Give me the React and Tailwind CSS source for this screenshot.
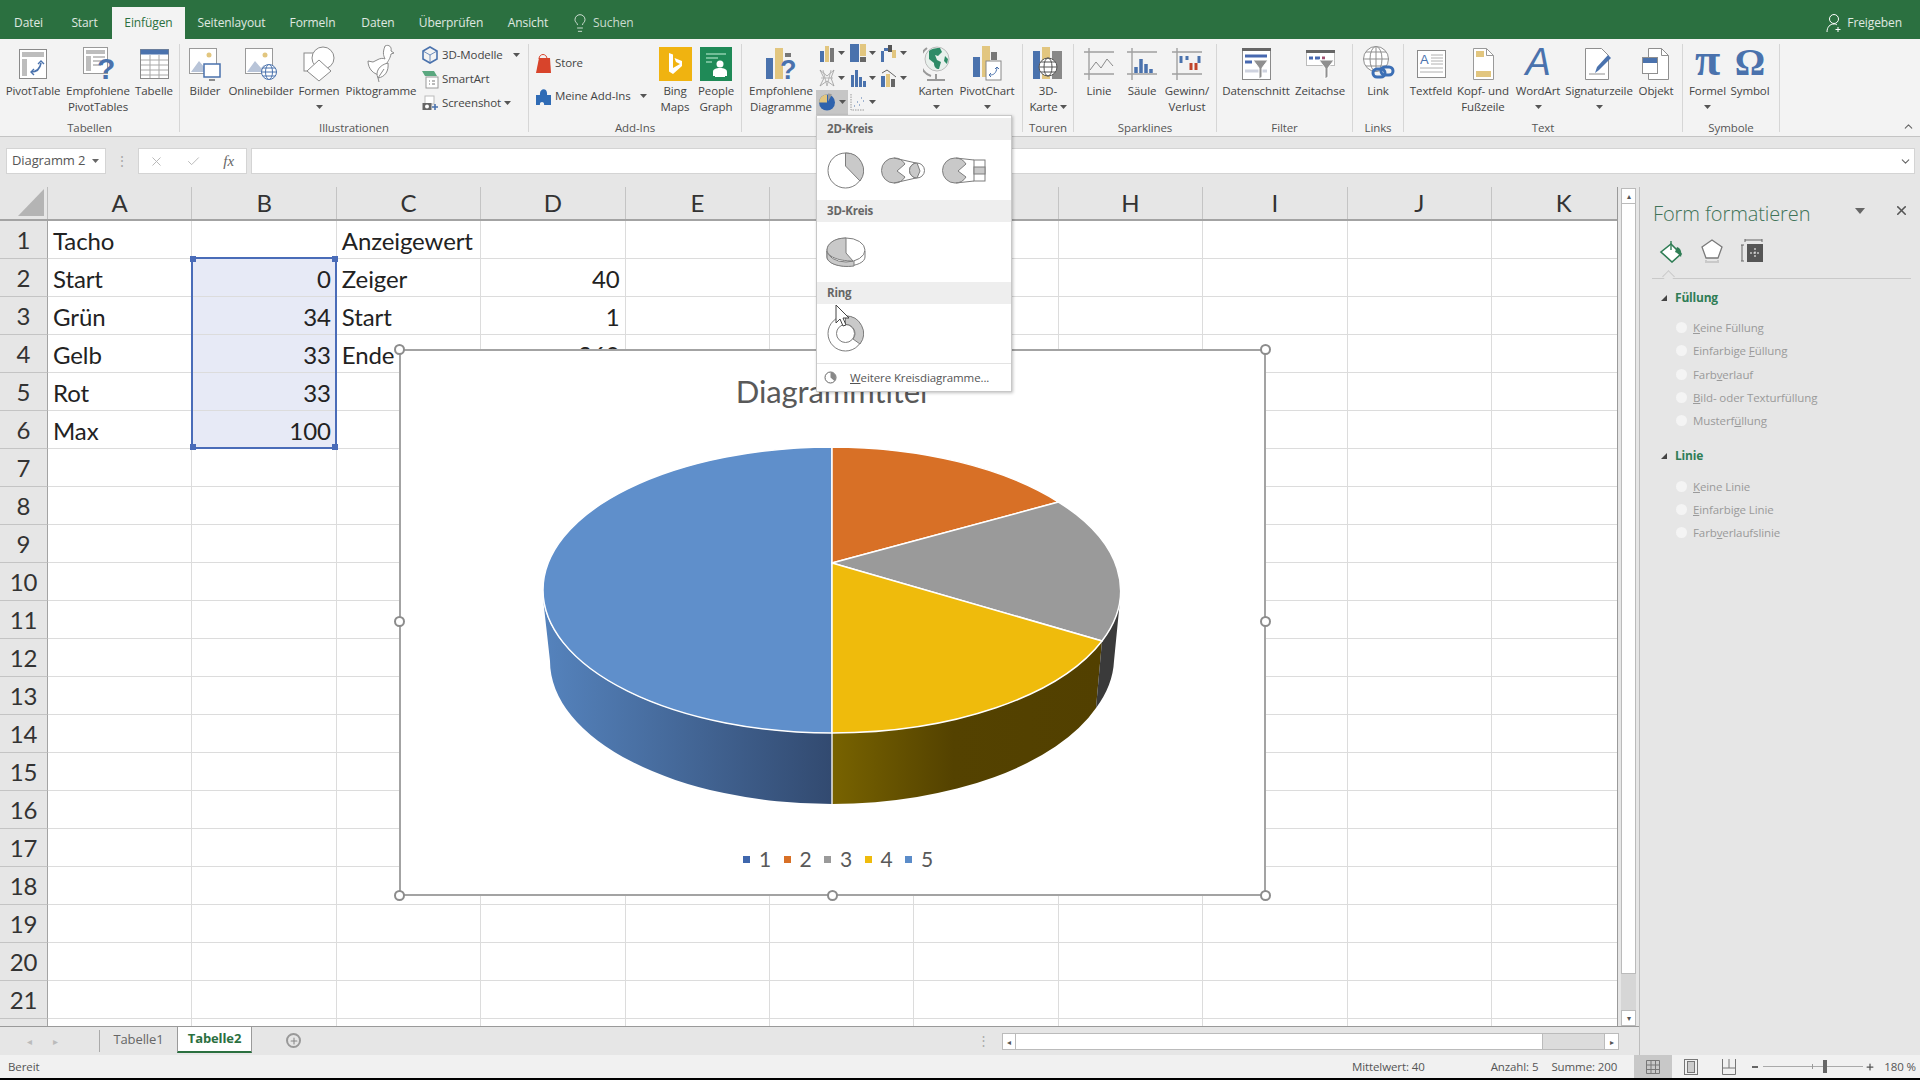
import React from 'react';
import { Lightbulb, X, Check, Plus, ChevronUp, ChevronDown } from 'lucide-react';

const Caret = ({ color = '#555' }) => (
  <svg width="7" height="4" viewBox="0 0 7 4" className="shrink-0"><path d="M0 0h7L3.5 4z" fill={color} /></svg>
);

const Svg = ({ w, h, vb, children }) => (
  <svg width={w} height={h} viewBox={vb || `0 0 ${w} ${h}`} fill="none" className="shrink-0">{children}</svg>
);

const BLUE = '#4a72ad';
const GOLD = '#e2c67f';
const GRAY = '#8c8c8c';

// ribbon icons
const PivotIcon = () => (
  <Svg w={28} h={30}>
    <rect x=".5" y=".5" width="27" height="29" fill="#fff" stroke="#8a8a8a" />
    <rect x="3" y="3" width="22" height="5" fill="#bdbdbd" />
    <rect x="3" y="10" width="5" height="17" fill="#bdbdbd" />
    <path d="M12 23c5 0 9-3 10-9" stroke={BLUE} strokeWidth="1.6" />
    <path d="M19 15l3-3 3 3M15 20l-3 3 3 3" stroke={BLUE} strokeWidth="1.4" />
  </Svg>
);
const RecPivotIcon = () => (
  <Svg w={34} h={36}>
    <rect x="2.5" y="1.5" width="24" height="26" fill="#fff" stroke="#9a9a9a" />
    <rect x="5" y="4" width="19" height="4" fill="#bdbdbd" />
    <rect x="5" y="10" width="5" height="15" fill="#bdbdbd" />
    <path d="M12 11h12M12 15h8M12 19h8" stroke="#c4c4c4" strokeWidth="2" />
    <text x="16" y="33" fontSize="30" fontWeight="700" fontFamily="Liberation Sans" fill={BLUE}>?</text>
  </Svg>
);
const TableIcon = () => (
  <Svg w={29} h={30}>
    <rect x=".5" y=".5" width="28" height="29" fill="#fff" stroke="#8a8a8a" />
    <rect x=".5" y=".5" width="28" height="5" fill={BLUE} />
    <path d="M1 11h27M1 16h27M1 21h27M1 26h27M10 6v23M19 6v23" stroke="#a8a8a8" />
  </Svg>
);
const PicIcon = ({ online }) => (
  <Svg w={32} h={34}>
    <rect x=".5" y="1.5" width="27" height="25" fill="#fff" stroke="#9a9a9a" />
    <circle cx="20" cy="8" r="2.5" fill={GOLD} />
    <path d="M2 25l8-11 6 7 3-3 7 7z" fill="#b8c4d8" />
    {online ? (
      <g stroke={BLUE} fill="#fff">
        <circle cx="24" cy="25" r="7.5" />
        <ellipse cx="24" cy="25" rx="3.5" ry="7.5" />
        <path d="M16.5 25h15M18 21h12M18 29h12" />
      </g>
    ) : (
      <g>
        <rect x="15" y="17" width="16" height="13" fill="#fff" stroke={BLUE} strokeWidth="1.5" />
        <path d="M20 33h6" stroke={GRAY} strokeWidth="2" />
      </g>
    )}
  </Svg>
);
const ShapesIcon = () => (
  <Svg w={32} h={36}>
    <rect x="1" y="7" width="19" height="18" fill="#fff" stroke="#8a8a8a" />
    <circle cx="20" cy="12" r="11" fill="#fff" stroke="#8a8a8a" />
    <path d="M16 14l12 11-12 10L4 25z" fill="#fff" stroke="#8a8a8a" />
  </Svg>
);
const PictoIcon = () => (
  <Svg w={30} h={40}>
    <path d="M19 2c4-2 7 1 6 5l3 2-3 1c-1 5-3 7-4 9 2 4-2 9-6 12-7 0-13-6-13-14l5 1 4-2c3-2 7-2 8-1-1-3-3-5 0-13z" fill="#fff" stroke="#8a8a8a" strokeWidth="1" />
    <path d="M12 34c-3-6 1-13 10-15 1 8-3 14-10 15zM12 34l6-9M13 38l-1-4" stroke="#8a8a8a" fill="#fff" />
  </Svg>
);
const CubeIcon = () => (
  <Svg w={16} h={18}>
    <path d="M8 1l7 4v8l-7 4-7-4V5z" stroke={BLUE} strokeWidth="1.6" />
    <path d="M8 9l7-4M8 9v8M8 9L1 5" stroke={BLUE} strokeWidth=".8" />
  </Svg>
);
const SmartIcon = () => (
  <Svg w={18} h={19}>
    <path d="M1 1h12l3 5H4z" fill="#5aa77f" />
    <rect x="5" y="7" width="12" height="11" fill="#fff" stroke="#9a9a9a" />
    <path d="M8 11h1M8 14h1M11 11h3M11 14h3" stroke="#777" />
  </Svg>
);
const ShotIcon = () => (
  <Svg w={17} h={16}>
    <rect x="3" y="1" width="9" height="8" fill="#fff" stroke="#bbb" />
    <rect x=".5" y="8" width="9" height="7" fill="#666" />
    <circle cx="5" cy="11.5" r="2" fill="#fff" />
    <path d="M13 9v6M10 12h6" stroke={BLUE} strokeWidth="1.6" />
  </Svg>
);
const StoreIcon = () => (
  <Svg w={15} h={19}>
    <path d="M3 4h11l1 15H0z" fill="#d8442b" />
    <path d="M3 5c0-6 8-6 8 0" stroke="#d8442b" />
  </Svg>
);
const AddinIcon = () => (
  <Svg w={15} h={17}>
    <path d="M0 7h4c-1-7 8-8 7 0h4v10H8c1-4-5-4-4 0H0z" fill="#2f6bb5" />
  </Svg>
);
const BingIcon = () => (
  <div className="w-[33px] h-[34px] bg-[#f0b310] flex items-center justify-center">
    <Svg w={16} h={24}>
      <path d="M2 1l4 1.5V16l7-4-4-2-1.5-4L15 9v5L6 22l-4-2.5z" fill="#fff" />
    </Svg>
  </div>
);
const PeopleIcon = () => (
  <div className="w-[32px] h-[34px] bg-[#1f8a57] relative overflow-hidden">
    <Svg w={32} h={34}>
      <path d="M6 7h20M6 11h12M6 15h6" stroke="#8fd0ae" strokeWidth="1.5" />
      <circle cx="20" cy="17" r="3.5" fill="#fff" />
      <path d="M13 29v-4c0-3 3-4 7-4s7 1 7 4v4h-2v1H15v-1z" fill="#fff" />
    </Svg>
  </div>
);
const RecChartIcon = () => (
  <Svg w={32} h={36}>
    <rect x="1" y="12" width="7" height="21" fill={BLUE} />
    <rect x="10" y="2" width="8" height="31" fill={GOLD} />
    <rect x="20" y="7" width="6" height="4" fill="#777" />
    <text x="15" y="33" fontSize="27" fontWeight="700" fontFamily="Liberation Sans" fill={BLUE}>?</text>
  </Svg>
);
const Bars = ({ children }) => <Svg w={16} h={18}>{children}</Svg>;
const ColIcon = () => (
  <Bars><rect x="1" y="7" width="4" height="11" fill={BLUE} /><rect x="6" y="2" width="4" height="16" fill={GOLD} /><rect x="11" y="4" width="4" height="14" fill="#777" /></Bars>
);
const TreeIcon = () => (
  <Bars><rect x="0" y="0" width="9" height="18" fill={BLUE} /><rect x="10" y="0" width="6" height="12" fill={GOLD} /><rect x="10" y="13" width="6" height="5" fill="#666" /></Bars>
);
const WaterIcon = () => (
  <Bars><rect x="0" y="7" width="3" height="11" fill={BLUE} /><rect x="3" y="4" width="4" height="3" fill={BLUE} /><rect x="7" y="1" width="4" height="7" fill="#555" /><rect x="11" y="6" width="4" height="8" fill={GOLD} /></Bars>
);
const RadarIcon = () => (
  <Bars><path d="M1 1l4 8-4 8 7-5 7 5-3-8 3-8-7 6z" stroke="#999" strokeWidth=".8" /><path d="M4 1l4 16 4-16M2 9h12" stroke="#aaa" strokeWidth=".8" /></Bars>
);
const StatIcon = () => (
  <Bars><rect x="1" y="6" width="3" height="12" fill={BLUE} /><rect x="5" y="1" width="3" height="17" fill={BLUE} /><rect x="9" y="8" width="3" height="10" fill={BLUE} /><rect x="13" y="12" width="3" height="6" fill={BLUE} /></Bars>
);
const ComboIcon = () => (
  <Bars><rect x="0" y="7" width="4" height="11" fill={BLUE} /><rect x="5" y="5" width="4" height="13" fill={GOLD} /><rect x="10" y="10" width="4" height="8" fill="#666" /><path d="M1 4l5-3 4 3 5 4" stroke="#666" /></Bars>
);
const PieSmall = () => (
  <Svg w={17} h={18}>
    <circle cx="8" cy="9.5" r="8" fill="#2f63ad" />
    <path d="M8 9.500V1.500A8 8 0 0 0 0 9.500z" fill={GOLD} />
    <path d="M9 8.500V.5a8 8 0 0 1 4 1z" fill="#9a9a9a" />
  </Svg>
);
const ScatterIcon = () => (
  <Svg w={16} h={18}>
    <path d="M1 1v16h14" stroke="#999" strokeDasharray="1.5 1" />
    <path d="M4 13h1M7 9h1M9 12h1M11 5h1M13 8h1" stroke={BLUE} />
  </Svg>
);
const GlobeIcon = () => (
  <Svg w={27} h={40}>
    <path d="M4 4a16 16 0 0 0 4 28" stroke="#999" strokeWidth="2" />
    <circle cx="14" cy="15" r="12" fill="#e8f0ec" stroke="#bbb" />
    <path d="M6 7c4-3 8-3 11-3l2 4-4 4-3-1 2 5 4 2-2 7c-3 0-5-2-5-6l-5-4zM22 12l3 3-1 5-3-3z" fill="#2e8b67" />
    <path d="M4 36h18M13 30v6" stroke="#999" strokeWidth="2" />
  </Svg>
);
const PivChartIcon = () => (
  <Svg w={30} h={38}>
    <rect x="1" y="12" width="7" height="20" fill={BLUE} />
    <rect x="10" y="1" width="8" height="31" fill={GOLD} />
    <rect x="19" y="7" width="6" height="8" fill="#777" />
    <rect x="14" y="16" width="15" height="19" fill="#fff" stroke="#888" />
    <path d="M18 30c4 0 6-2 7-7M23 24l2-2 2 2M19 28l-2 2 2 2" stroke={BLUE} />
  </Svg>
);
const Map3DIcon = () => (
  <Svg w={30} h={36}>
    <rect x="0" y="5" width="7" height="28" fill={BLUE} />
    <rect x="9" y="1" width="8" height="32" fill={GOLD} />
    <rect x="19" y="5" width="10" height="28" fill="#888" />
    <circle cx="15" cy="21" r="9" fill="#fff" stroke="#555" />
    <ellipse cx="15" cy="21" rx="4" ry="9" stroke="#555" />
    <path d="M6 21h18M8 16h14M8 26h14" stroke="#555" />
  </Svg>
);
const Spark = ({ children }) => (
  <Svg w={30} h={32}>
    <path d="M0 4h30M0 26h30M5 0v32" stroke="#a0a0a0" strokeWidth="1.4" />
    {children}
  </Svg>
);
const SliceIcon = () => (
  <Svg w={29} h={32}>
    <rect x=".5" y=".5" width="28" height="31" fill="#fff" stroke="#8a8a8a" />
    <rect x="0" y="0" width="29" height="3" fill="#666" />
    <path d="M3 8h22" stroke="#4768b0" strokeWidth="3" />
    <path d="M3 14h7" stroke="#4768b0" strokeWidth="3" />
    <path d="M3 23h22" stroke="#cfd3df" strokeWidth="3" />
    <path d="M11 12h15l-6 8v9l-3 2V20z" fill="#8f8f8f" stroke="#fff" />
  </Svg>
);
const TimelineIcon = () => (
  <Svg w={29} h={32}>
    <rect x=".5" y="2.5" width="28" height="15" fill="#fff" stroke="#bbb" />
    <rect x="0" y="2" width="29" height="3" fill="#666" />
    <path d="M3 10h4M9 10h5" stroke="#4768b0" strokeWidth="3" />
    <path d="M16 10h3" stroke="#a05070" strokeWidth="3" />
    <path d="M13 12h15l-6 8v9l-3 2V20z" fill="#8f8f8f" stroke="#fff" />
  </Svg>
);
const LinkIcon = () => (
  <Svg w={33} h={38}>
    <g stroke="#8f8f8f" fill="#fff">
      <circle cx="14" cy="14" r="12.5" />
      <ellipse cx="14" cy="14" rx="6" ry="12.5" />
      <path d="M1.5 14h25M4 7h20M4 21h20M14 1.5v25" />
    </g>
    <g stroke="#3c6fb5" strokeWidth="3" fill="none">
      <rect x="11" y="24" width="12" height="8" rx="4" />
      <rect x="19" y="22" width="12" height="8" rx="4" />
    </g>
  </Svg>
);
const TextboxIcon = () => (
  <Svg w={29} h={28}>
    <rect x=".5" y=".5" width="28" height="27" fill="#fff" stroke="#8a8a8a" />
    <text x="3" y="14" fontSize="13" fontFamily="Liberation Sans" fill={BLUE}>A</text>
    <path d="M14 5h12M14 8h12M14 11h12M14 14h12M3 18h23M3 22h23" stroke="#b0b0b0" />
  </Svg>
);
const PageIcon = () => (
  <Svg w={21} h={32}>
    <path d="M.5.5h13l7 7v24H.5z" fill="#fff" stroke="#9a9a9a" />
    <path d="M13.5.5v7h7" stroke="#9a9a9a" />
    <rect x="3" y="3" width="8" height="6" fill={GOLD} />
    <rect x="3" y="23" width="15" height="6" fill={GOLD} />
  </Svg>
);
const SigIcon = () => (
  <Svg w={28} h={34}>
    <path d="M.5 1.5h16l7 7v24H.5z" fill="#fff" stroke="#8f8f8f" />
    <path d="M4 27h16" stroke="#8f8f8f" />
    <path d="M10 26l2-6 11-12 3 3-12 12z" fill={BLUE} />
  </Svg>
);
const ObjectIcon = () => (
  <Svg w={28} h={34}>
    <path d="M6.5 1.5h13l7 7v24h-20z" fill="#fff" stroke="#8f8f8f" />
    <path d="M19.5 1.5v7h7" stroke="#8f8f8f" />
    <rect x=".5" y="10.5" width="15" height="16" fill="#fff" stroke="#8f8f8f" />
    <rect x="1" y="11" width="14" height="5" fill={BLUE} />
  </Svg>
);

const Big = ({ w, icon, l1, l2, caret }) => (
  <div className={`${w} shrink-0 flex flex-col items-center`}>
    <div className="h-[39px] flex items-center justify-center">{icon}</div>
    <div className="h-[16px] leading-[16px] whitespace-nowrap">{l1}</div>
    {l2 && <div className="h-[16px] leading-[16px] whitespace-nowrap flex items-center gap-[2px]">{l2}</div>}
    {caret && <div className="h-[16px] flex items-center justify-center"><Caret /></div>}
  </div>
);

const Group = ({ w, label, children, line = true }) => (
  <div className={`${w} h-[88px] shrink-0 flex flex-col ${line ? 'border-r border-[#d6d6d6]' : ''}`}>
    <div className="flex h-[72px]">{children}</div>
    <div className="mt-auto -mb-[4px] leading-[16px] text-center text-[#555] whitespace-nowrap">{label}</div>
  </div>
);

const Small = ({ icon, text, caret }) => (
  <div className="flex items-center gap-[3px] h-[24px] whitespace-nowrap">
    <div className="w-[18px] flex justify-center">{icon}</div>
    <span>{text}</span>
    {caret}
  </div>
);

const tabs = [
  ['Datei', 'w-[57px]'],
  ['Start', 'w-[55px]'],
  ['Einfügen', 'w-[73px]'],
  ['Seitenlayout', 'w-[93px]'],
  ['Formeln', 'w-[69px]'],
  ['Daten', 'w-[62px]'],
  ['Überprüfen', 'w-[84px]'],
  ['Ansicht', 'w-[70px]'],
];

function TabBar() {
  return (
    <div className="h-[39px] bg-[#2b7040] flex text-white/85 shrink-0 text-[12px] tracking-[-0.1px]">
      {tabs.map(([t, w]) => (
        <div key={t} className={`${w} flex items-center justify-center mt-[7px] h-[32px] ${t === 'Einfügen' ? 'bg-[#f3f3f3] text-[#2b7040]' : ''}`}>{t}</div>
      ))}
      <div className="flex items-center gap-[3px] ml-[7px] mt-[7px] h-[32px] text-white/75">
        <Lightbulb size={20} strokeWidth={1.2} />
        <span>Suchen</span>
      </div>
      <div className="ml-auto mr-[18px] mt-[7px] h-[32px] flex items-center gap-[5px]">
        <Svg w={16} h={20}>
          <circle cx="8" cy="6" r="4.5" stroke="#fff" />
          <path d="M1 19c0-5 3-8 7-8 1 0 2 0 3 1M12 14v5M9.500 16.500h5" stroke="#fff" />
        </Svg>
        <span>Freigeben</span>
      </div>
    </div>
  );
}

function Ribbon() {
  return (
    <div className="h-[97px] bg-[#f3f3f3] flex pt-[5px] shrink-0 text-[#444] relative">
      <Group w="w-[180px]" label="Tabellen">
        <Big w="w-[66px]" icon={<PivotIcon />} l1="PivotTable" />
        <Big w="w-[64px]" icon={<RecPivotIcon />} l1="Empfohlene" l2="PivotTables" />
        <Big w="w-[48px]" icon={<TableIcon />} l1="Tabelle" />
      </Group>
      <Group w="w-[349px]" label="Illustrationen">
        <Big w="w-[50px]" icon={<PicIcon />} l1="Bilder" />
        <Big w="w-[62px]" icon={<PicIcon online />} l1="Onlinebilder" />
        <Big w="w-[54px]" icon={<ShapesIcon />} l1="Formen" caret />
        <Big w="w-[70px]" icon={<PictoIcon />} l1="Piktogramme" />
        <div className="flex flex-col ml-[5px] -mt-[1px]">
          <Small icon={<CubeIcon />} text="3D-Modelle" caret={<span className="ml-[7px]"><Caret /></span>} />
          <Small icon={<SmartIcon />} text="SmartArt" />
          <Small icon={<ShotIcon />} text="Screenshot" caret={<Caret />} />
        </div>
      </Group>
      <Group w="w-[213px]" label="Add-Ins">
        <div className="w-[126px] flex flex-col pl-[5px] pt-[7px] gap-[9px]">
          <Small icon={<StoreIcon />} text="Store" />
          <Small icon={<AddinIcon />} text="Meine Add-Ins" caret={<span className="ml-[6px]"><Caret /></span>} />
        </div>
        <Big w="w-[40px]" icon={<BingIcon />} l1="Bing" l2="Maps" />
        <Big w="w-[42px]" icon={<PeopleIcon />} l1="People" l2="Graph" />
      </Group>
      <Group w="w-[281px]" label="">
        <Big w="w-[78px]" icon={<RecChartIcon />} l1="Empfohlene" l2="Diagramme" />
        <div className="-ml-[4px] -mt-[3px] w-[93px] shrink-0 grid grid-cols-3 h-[74px] content-start">
          {[<ColIcon />, <TreeIcon />, <WaterIcon />, <RadarIcon />, <StatIcon />, <ComboIcon />, <PieSmall />, <ScatterIcon />].map((ic, i) => (
            <div key={i} className={`h-[24.5px] w-[32px] flex items-center justify-center gap-[3px] ${i === 6 ? 'bg-[#c6c6c6]' : ''}`}>
              {ic}
              <Caret />
            </div>
          ))}
        </div>
        <Big w="w-[54px]" icon={<GlobeIcon />} l1="Karten" caret />
        <Big w="w-[48px]" icon={<PivChartIcon />} l1="PivotChart" caret />
      </Group>
      <Group w="w-[51px]" label="Touren">
        <Big w="w-[50px]" icon={<Map3DIcon />} l1="3D-" l2={<>Karte<Caret /></>} />
      </Group>
      <Group w="w-[143px]" label="Sparklines">
        <Big w="w-[50px]" l1="Linie" icon={<Spark><path d="M6 22l6-8 5 6 6-9 6 7" stroke="#8a8a8a" /></Spark>} />
        <Big w="w-[36px]" l1="Säule" icon={<Spark><path d="M9 25v-6M14 25V11M19 25v-9M24 25v-4" stroke={BLUE} strokeWidth="3.5" /></Spark>} />
        <Big w="w-[54px]" l1="Gewinn/" l2="Verlust" icon={<Spark><path d="M9 8v7M15 8v4M27 8v7" stroke={BLUE} strokeWidth="3" /><path d="M19 15v7M24 15v7" stroke="#c0442b" strokeWidth="3" /></Spark>} />
      </Group>
      <Group w="w-[136px]" label="Filter">
        <Big w="w-[78px]" icon={<SliceIcon />} l1="Datenschnitt" />
        <Big w="w-[50px]" icon={<TimelineIcon />} l1="Zeitachse" />
      </Group>
      <Group w="w-[51px]" label="Links">
        <Big w="w-[50px]" icon={<LinkIcon />} l1="Link" />
      </Group>
      <Group w="w-[279px]" label="Text">
        <Big w="w-[54px]" icon={<TextboxIcon />} l1="Textfeld" />
        <Big w="w-[50px]" icon={<PageIcon />} l1="Kopf- und" l2="Fußzeile" />
        <Big w="w-[60px]" icon={<span className="font-['Liberation_Sans',sans-serif] italic text-[38px] leading-[38px] text-[#4a72ad] -mt-[3px]">A</span>} l1="WordArt" caret />
        <Big w="w-[62px]" icon={<SigIcon />} l1="Signaturzeile" caret />
        <Big w="w-[52px]" icon={<ObjectIcon />} l1="Objekt" />
      </Group>
      <Group w="w-[97px]" label="Symbole">
        <Big w="w-[49px]" icon={<span className="font-['Liberation_Serif',serif] font-bold text-[46px] leading-[38px] text-[#4a72ad] -mt-[7px]">π</span>} l1="Formel" caret />
        <Big w="w-[36px]" icon={<span className="font-['Liberation_Serif',serif] font-bold text-[38px] leading-[38px] text-[#4a72ad] -mt-[4px]">Ω</span>} l1="Symbol" />
      </Group>
      <div className="flex-1 flex justify-end items-end pr-[5px] pb-[3px]">
        <ChevronUp size={13} color="#666" />
      </div>
    </div>
  );
}

function FormulaBar() {
  return (
    <div className="h-[51px] bg-[#e6e6e6] border-t border-[#c4c4c4] shrink-0 flex pt-[11px] pl-[6px] pr-[5px] text-[#555]">
      <div className="w-[100px] h-[26px] bg-white border border-[#d4d4d4] flex items-center justify-between pl-[5px] pr-[6px] text-[13px] whitespace-nowrap">
        <span>Diagramm 2</span>
        <Caret color="#666" />
      </div>
      <div className="w-[32px] flex items-center justify-center text-[#aaa] text-[14px] leading-none h-[26px]">⋮</div>
      <div className="w-[109px] h-[26px] bg-white border border-[#d4d4d4] flex items-center justify-between pl-[10px] pr-[12px]">
        <X size={15} color="#b5b5b5" strokeWidth={1.5} />
        <Check size={15} color="#b5b5b5" strokeWidth={1.5} />
        <span className="font-['Liberation_Serif',serif] italic text-[15px] text-[#666]">fx</span>
      </div>
      <div className="flex-1 ml-[4px] h-[26px] bg-white border border-[#d4d4d4] flex items-center justify-end pr-[2px]">
        <ChevronDown size={13} color="#666" />
      </div>
    </div>
  );
}

const cols = ['A', 'B', 'C', 'D', 'E', 'F', 'G', 'H', 'I', 'J', 'K'];
const data = {
  1: ['Tacho', '', 'Anzeigewert', ''],
  2: ['Start', '0', 'Zeiger', '40'],
  3: ['Grün', '34', 'Start', '1'],
  4: ['Gelb', '33', 'Ende', '360'],
  5: ['Rot', '33', '', ''],
  6: ['Max', '100', '', ''],
};
const rows = Array.from({ length: 22 }, (_, i) => i + 1);

function Sheet() {
  return (
    <div className="flex-1 flex flex-col overflow-hidden border-r border-[#9a9a9a] font-['Lato',sans-serif] text-[#222]">
      <div className="flex h-[34px] shrink-0 bg-[#e6e6e6] border-b-2 border-[#a3a3a3]">
        <div className="w-[48px] shrink-0 border-r border-[#bdbdbd] flex items-end justify-end pr-[3px] pb-[3px]">
          <Svg w={26} h={27}><path d="M26 0v27H0z" fill="#b4b4b4" /></Svg>
        </div>
        {cols.map(c => (
          <div key={c} className="w-[144.4px] shrink-0 border-r border-[#c4c4c4] flex items-center justify-center text-[24px] text-[#333]">{c}</div>
        ))}
      </div>
      <div className="flex-1 overflow-hidden bg-white">
        {rows.map(r => (
          <div key={r} className="flex h-[38px]">
            <div className="w-[48px] shrink-0 bg-[#e6e6e6] border-r border-[#a3a3a3] border-b border-b-[#c4c4c4] flex items-center justify-center text-[24px] text-[#333]">{r < 22 ? r : ''}</div>
            {cols.map((c, i) => {
              const v = data[r] && data[r][i];
              const sel = i === 1 && r >= 2 && r <= 6;
              return (
                <div key={c} className={`w-[144.4px] shrink-0 border-r border-b border-[#dcdcdc] flex items-center pt-[3px] px-[5px] text-[24px] whitespace-nowrap ${i === 1 || i === 3 ? 'justify-end' : ''} ${sel ? 'bg-[#e7eaf6]' : ''}`}>
                  {v}
                </div>
              );
            })}
          </div>
        ))}
      </div>
    </div>
  );
}

function TabStrip() {
  return (
    <div className="h-[29px] shrink-0 border-t border-[#9a9a9a] bg-[#e6e6e6] flex text-[13px] text-[#666] pr-[20px]">
      <div className="w-[100px] shrink-0 flex items-center pl-[27px] gap-[21px] text-[#bbb] border-r border-[#aaa] my-[3px] text-[10px]">
        <span>◂</span><span>▸</span>
      </div>
      <div className="w-[77px] shrink-0 h-[25px] flex items-center justify-center">Tabelle1</div>
      <div className="w-[75px] shrink-0 h-[26px] bg-white border-x border-[#9a9a9a] border-b-2 border-b-[#2b7040] flex items-center justify-center font-bold text-[#2b7040]">Tabelle2</div>
      <div className="ml-[34px] mt-[6px] w-[15px] h-[15px] rounded-full border-2 border-[#999] flex items-center justify-center">
        <Plus size={10} color="#888" strokeWidth={2.5} />
      </div>
      <div className="ml-auto flex items-start pt-[6px] gap-[12px]">
        <span className="text-[#aaa] leading-[14px]">⋮</span>
        <div className="w-[617px] h-[17px] flex border border-[#bbb] bg-[#dcdcdc]">
          <div className="w-[13px] bg-white flex items-center justify-center text-[8px] text-[#555] border-r border-[#bbb]">◂</div>
          <div className="w-[527px] bg-white border-r border-[#bbb]" />
          <div className="flex-1" />
          <div className="w-[14px] bg-white flex items-center justify-center text-[8px] text-[#555] border-l border-[#bbb]">▸</div>
        </div>
      </div>
    </div>
  );
}

function VScroll() {
  return (
    <div className="w-[21px] shrink-0 flex flex-col pt-[1px] pl-[3px] pr-[3px] bg-[#e6e6e6]">
      <div className="h-[16px] bg-white border border-[#bbb] flex items-center justify-center text-[8px] text-[#555]">▴</div>
      <div className="h-[770px] bg-white border-x border-b border-[#bbb]" />
      <div className="flex-1 bg-[#d6d6d6]" />
      <div className="h-[16px] bg-white border border-[#bbb] flex items-center justify-center text-[8px] text-[#555]">▾</div>
    </div>
  );
}

const PanelOption = ({ children }) => (
  <div className="flex items-center h-[23.3px] pl-[23px] gap-[6px] text-[11.5px] text-[#9a9a9a]">
    <div className="w-[11px] h-[11px] rounded-full bg-[#f4f4f4] shrink-0" />
    <span className="whitespace-nowrap">{children}</span>
  </div>
);

const PanelHead = ({ children }) => (
  <div className="flex items-center gap-[8px] pl-[8px] h-[20px] font-bold text-[12px] tracking-[-0.2px] text-[#2f7d55]">
    <svg width="6" height="6" viewBox="0 0 6 6"><path d="M6 0v6H0z" fill="#444" /></svg>
    {children}
  </div>
);

function FormatPanel() {
  return (
    <div className="w-[281px] shrink-0 bg-[#e6e6e6] border-l border-[#bdbdbd] pl-[13px]">
      <div className="flex items-center h-[52px] pt-[1px]">
        <div className="text-[20px] font-light text-[#3f7358] whitespace-nowrap">Form formatieren</div>
        <div className="ml-[45px] -mt-[6px]"><Svg w={10} h={6}><path d="M0 0h10L5 6z" fill="#666" /></Svg></div>
        <X className="ml-[29px] -mt-[6px]" size={15} color="#555" strokeWidth={2.5} />
      </div>
      <div className="flex items-center h-[38px] pl-[6px] gap-[18px] -mt-[7px] mb-[6px]">
        <Svg w={24} h={24}>
          <path d="M12 5l10 10-9 8L2 13z" fill="#fff" stroke="#2f7d55" strokeWidth="1.6" />
          <path d="M12 2v9" stroke="#2f7d55" strokeWidth="1.4" />
          <path d="M18 8c4 1 5 6 4 10-2-2-3-4-6-5z" fill="#2f7d55" />
        </Svg>
        <Svg w={22} h={26}>
          <path d="M11 2l10 7-4 11H5L1 9z" fill="#fff" stroke="#7a7a7a" strokeWidth="1.3" />
          <path d="M5 22v2M17 22v2M4 24h14" stroke="#c9c9c9" strokeWidth="2" />
        </Svg>
        <Svg w={22} h={24}>
          <path d="M1 6v16M0 6h3M0 22h3M4 1h17M4 0v3M21 0v3" stroke="#666" />
          <rect x="6" y="5" width="16" height="18" fill="#555" />
          <path d="M14 9v10M9 14h10" stroke="#fff" strokeDasharray="2 1.5" />
        </Svg>
      </div>
      <div className="relative h-[3px] mr-[9px] -ml-[1px] border-b border-[#c9c9c9]">
        <div className="absolute left-[12px] -top-[4px] w-[9px] h-[9px] rotate-45 border-l border-t border-[#c9c9c9] bg-[#e6e6e6]" />
      </div>
      <div className="mt-[9px]"><PanelHead>Füllung</PanelHead></div>
      <div className="mt-[8px]">
        <PanelOption><u>K</u>eine Füllung</PanelOption>
        <PanelOption>Einfarbige <u>F</u>üllung</PanelOption>
        <PanelOption>Farb<u>v</u>erlauf</PanelOption>
        <PanelOption><u>B</u>ild- oder Texturfüllung</PanelOption>
        <PanelOption>Musterf<u>ü</u>llung</PanelOption>
      </div>
      <div className="mt-[14px]"><PanelHead>Linie</PanelHead></div>
      <div className="mt-[8px]">
        <PanelOption><u>K</u>eine Linie</PanelOption>
        <PanelOption><u>E</u>infarbige Linie</PanelOption>
        <PanelOption>Farb<u>v</u>erlaufslinie</PanelOption>
      </div>
    </div>
  );
}

function StatusBar() {
  return (
    <div className="h-[23px] bg-[#f1f1f1] shrink-0 flex items-center text-[11.5px] text-[#555] pl-[8px]">
      <span>Bereit</span>
      <span className="ml-auto">Mittelwert: 40</span>
      <span className="ml-[66px]">Anzahl: 5</span>
      <span className="ml-[13px]">Summe: 200</span>
      <div className="ml-[17px] w-[38px] h-full bg-[#c8c8c8] flex items-center justify-center">
        <Svg w={14} h={14}><path d="M.5.5h13v13H.5zM.5 5h13M.5 9.500h13M5 .5v13M9.500.5v13" stroke="#777" /></Svg>
      </div>
      <div className="w-[38px] flex justify-center">
        <Svg w={14} h={16}><rect x=".5" y=".5" width="13" height="15" stroke="#777" /><rect x="3.500" y="2.500" width="7" height="11" fill="#ccc" stroke="#777" /></Svg>
      </div>
      <div className="w-[38px] flex justify-center">
        <Svg w={14} h={16}><path d="M.5 0v15.500h13V0M.5 9h13M7 0v9" stroke="#777" /></Svg>
      </div>
      <span className="ml-[4px] w-[6px] h-[2px] bg-[#666]" />
      <div className="relative ml-[5px] w-[100px] h-[1px] bg-[#aaa]">
        <div className="absolute left-[49px] -top-[2px] w-[1px] h-[5px] bg-[#999]" />
        <div className="absolute left-[60px] -top-[6px] w-[4px] h-[13px] bg-[#666]" />
      </div>
      <Plus className="ml-[2px]" size={10} color="#555" strokeWidth={3} />
      <span className="ml-[9px] mr-[4px] whitespace-nowrap">180 %</span>
    </div>
  );
}

function Selection() {
  const corners = ['-left-[3px] -top-[3px]', '-right-[3px] -top-[3px]', '-left-[3px] -bottom-[3px]', '-right-[3px] -bottom-[3px]'];
  return (
    <div className="absolute left-[191px] top-[257px] w-[146px] h-[192px] border-2 border-[#4a6cb8]">
      {corners.map(c => <div key={c} className={`absolute w-[6px] h-[6px] bg-[#4a6cb8] ${c}`} />)}
    </div>
  );
}

const Handle = ({ pos }) => (
  <div className={`absolute w-[11px] h-[11px] rounded-full bg-white border-2 border-[#8c8c8c] ${pos}`} />
);

const legend = [
  ['1', 'bg-[#3f67ad]'],
  ['2', 'bg-[#d87026]'],
  ['3', 'bg-[#9a9a9a]'],
  ['4', 'bg-[#efbb0c]'],
  ['5', 'bg-[#5b8cc9]'],
];

function Chart() {
  return (
    <div className="absolute left-[399px] top-[349px] w-[867px] h-[547px] bg-white border-2 border-[#a3a3a3] flex flex-col items-center font-['Lato',sans-serif] text-[#595959]">
      <div className="text-[31px] leading-[36px] mt-[22px] -ml-[2px]">Diagrammtitel</div>
      <svg className="absolute left-0 top-0" width="863" height="543" viewBox="401 351 863 543">
        <defs>
          <linearGradient id="blueSide" x1="0" x2="1" y1="0" y2="0">
            <stop offset="0" stopColor="#5583bd" />
            <stop offset="1" stopColor="#324a70" />
          </linearGradient>
          <linearGradient id="goldSide" x1="0" x2="1" y1="0" y2="0">
            <stop offset="0" stopColor="#786300" />
            <stop offset=".45" stopColor="#544200" />
            <stop offset="1" stopColor="#524000" />
          </linearGradient>
        </defs>
        <path d="M832 733A289 143 0 0 1 543 598L550 661A282 143 0 0 0 832 804Z" fill="url(#blueSide)" />
        <path d="M832 733A289 143 0 0 0 1102 641L1096 708A282 143 0 0 1 832 804Z" fill="url(#goldSide)" />
        <path d="M1102 641A289 143 0 0 0 1120 600L1114 661A282 143 0 0 1 1096 708Z" fill="#3a3a3a" />
        <path d="M832 733V804" stroke="#e8e8e8" strokeWidth="1.5" />
        <g stroke="#fff" strokeWidth="1.5" strokeLinejoin="round">
          <path d="M832 563V447A289 143 0 0 0 832 733Z" fill="#5f8fcb" />
          <path d="M832 563V447A289 143 0 0 1 1058.500 502Z" fill="#d87026" />
          <path d="M832 563L1058.500 502A289 143 0 0 1 1102 641Z" fill="#9a9a9a" />
          <path d="M832 563L1102 641A289 143 0 0 1 832 733Z" fill="#efbb0c" />
        </g>
      </svg>
      <div className="absolute left-[342px] top-[493px] flex items-center text-[21px] leading-[30px] text-[#595959]">
        {legend.map(([n, c]) => (
          <div key={n} className="flex items-center w-[40.5px] gap-[9px]">
            <span className={`w-[7px] h-[7px] ${c}`} />
            <span>{n}</span>
          </div>
        ))}
      </div>
      <Handle pos="-left-[7px] -top-[7px]" />
      <Handle pos="left-[426px] -top-[7px]" />
      <Handle pos="-right-[7px] -top-[7px]" />
      <Handle pos="-left-[7px] top-[265px]" />
      <Handle pos="-right-[7px] top-[265px]" />
      <Handle pos="-left-[7px] -bottom-[7px]" />
      <Handle pos="left-[426px] -bottom-[7px]" />
      <Handle pos="-right-[7px] -bottom-[7px]" />
    </div>
  );
}

const MenuHead = ({ children }) => (
  <div className="h-[22px] shrink-0 bg-[#eeeeee] flex items-center pl-[10px] font-bold text-[11.5px] tracking-[-0.2px] text-[#666]">{children}</div>
);

function ChartMenu() {
  const s = '#7d7d7d';
  const fill = '#c9c9c9';
  return (
    <div className="absolute left-[816px] top-[115px] w-[196px] h-[277px] bg-white border border-[#c8c8c8] shadow-[1px_1px_3px_rgba(0,0,0,0.25)] pt-[2px] flex flex-col">
      <MenuHead>2D-Kreis</MenuHead>
      <div className="h-[60px] flex items-center pl-[10px] gap-[16px]">
        <Svg w={37} h={37}>
          <circle cx="18.5" cy="18.5" r="17.5" fill="#fff" stroke={s} />
          <path d="M18.500 1A17.500 17.500 0 0 1 33 29L18.500 14z" fill={fill} stroke={s} />
        </Svg>
        <Svg w={46} h={27}>
          <path d="M14 1a12.500 12.500 0 1 0 0 25a12.500 12.500 0 0 0 11-6l-8-6 8-7a12.500 12.500 0 0 0-11-6z" fill={fill} stroke={s} />
          <path d="M14 1l22 5M14 26l22-5" stroke={s} />
          <circle cx="37" cy="13.500" r="7.500" fill="#fff" stroke={s} />
          <path d="M37 6a7.500 7.500 0 0 0 0 15l3-7z" fill={fill} stroke={s} />
        </Svg>
        <Svg w={44} h={27}>
          <path d="M13 1a12.500 12.500 0 1 0 0 25a12.500 12.500 0 0 0 11-6l-8-6 8-7a12.500 12.500 0 0 0-11-6z" fill={fill} stroke={s} />
          <path d="M14 1l18 2M14 26l18-2" stroke={s} />
          <rect x="32" y="3" width="11" height="21" fill="#fff" stroke={s} />
          <rect x="32" y="10" width="11" height="7" fill={fill} stroke={s} />
        </Svg>
      </div>
      <MenuHead>3D-Kreis</MenuHead>
      <div className="h-[60px] flex items-center pl-[9px]">
        <Svg w={40} h={30}>
          <path d="M1 14v6c0 5 8 9 19 9s19-4 19-9v-6" fill="#fff" stroke={s} />
          <path d="M1 14c0 5 8 9 27 9l0 6c-15 2-27-3-27-9z" fill={fill} stroke={s} />
          <ellipse cx="20" cy="13" rx="19" ry="12" fill="#fff" stroke={s} />
          <path d="M20 1C8 1 1 7 1 13s10 11 26 11l-7-8z" fill={fill} stroke={s} />
        </Svg>
      </div>
      <MenuHead>Ring</MenuHead>
      <div className="h-[59px] flex items-center pl-[10px]">
        <Svg w={37} h={37}>
          <circle cx="18.5" cy="18.5" r="17.5" fill="#fff" stroke={s} />
          <path d="M18.500 1A17.500 17.500 0 0 1 33 29L26 24A9 9 0 0 0 18.500 9.500z" fill={fill} stroke={s} />
          <circle cx="18.5" cy="18.5" r="9" fill="#fff" stroke={s} />
        </Svg>
      </div>
      <div className="flex-1 border-t border-[#e3e3e3] flex items-center pl-[7px] gap-[13px] text-[11.5px] text-[#555]">
        <Svg w={13} h={13}>
          <circle cx="6.5" cy="6.5" r="5.5" stroke="#666" fill="#fff" />
          <path d="M6.500 1a5.500 5.500 0 0 1 4 9L6.500 6.500z" fill="#888" />
        </Svg>
        <span className="whitespace-nowrap"><u>W</u>eitere Kreisdiagramme...</span>
      </div>
    </div>
  );
}

export default function App() {
  return (
    <div className="relative w-[1920px] h-[1080px] overflow-hidden bg-black flex flex-col font-['Open_Sans',sans-serif] text-[11.5px] tracking-[-0.1px]">
      <TabBar />
      <Ribbon />
      <FormulaBar />
      <div className="h-[868px] flex shrink-0 bg-[#e6e6e6]">
        <div className="w-[1639px] shrink-0 flex flex-col">
          <div className="h-[839px] flex shrink-0">
            <Sheet />
            <VScroll />
          </div>
          <TabStrip />
        </div>
        <FormatPanel />
      </div>
      <StatusBar />
      <Selection />
      <Chart />
      <ChartMenu />
      <svg className="absolute left-[835px] top-[304px]" width="16" height="24" viewBox="0 0 16 24">
        <path d="M1 1v18l4-4 3 7 3-1-3-7h6z" fill="#fff" stroke="#444" />
      </svg>
    </div>
  );
}
